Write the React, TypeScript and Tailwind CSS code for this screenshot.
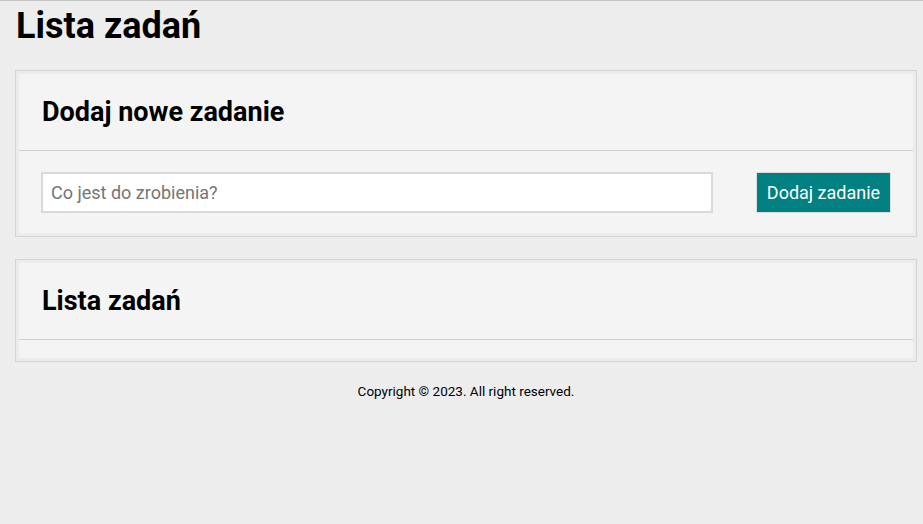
import React from "react";

function Card({ title, children }: { title: string; children?: React.ReactNode }) {
  return (
    <div className="ml-[15px] mr-[6px] border border-[#d4d4d4] bg-[#ebebeb] p-[3px]">
      <div className="bg-[#f4f4f4]">
        <div className="flex h-[77px] items-center border-b border-[#d3cfcf] px-[23px]">
          <h2 className="text-[27px] font-bold leading-[30px] text-black">{title}</h2>
        </div>
        {children}
      </div>
    </div>
  );
}

export default function App() {
  return (
    <div
      className="min-h-[524px] border-t border-[#c6c6c6] bg-[#ededed] text-black"
      style={{ fontFamily: "Roboto, 'Liberation Sans', sans-serif" }}
    >
      <h1 className="ml-[16px] mt-[3px] mb-[22px] text-[36px] font-bold leading-[44px]">Lista zadań</h1>
      <Card title="Dodaj nowe zadanie">
        <div className="flex items-center pl-[22px] pr-[22px] pt-[21px] pb-[20px]">
          <input
            type="text"
            placeholder="Co jest do zrobienia?"
            className="h-[41px] flex-1 border-2 border-[#d9d9d9] bg-white px-[8px] text-[18px] text-black outline-none placeholder:text-[#757575]"
          />
          <button className="ml-[43px] h-[41px] w-[135px] border border-[#dddddd] bg-[#008080] text-[18px] text-white">
            Dodaj zadanie
          </button>
        </div>
      </Card>
      <div className="h-[22px]" />
      <Card title="Lista zadań">
        <div className="h-[18px]" />
      </Card>
      <p className="ml-[15px] mr-[6px] mt-[21px] text-center text-[13.5px] leading-[16px]">
        Copyright © 2023. All right reserved.
      </p>
    </div>
  );
}
